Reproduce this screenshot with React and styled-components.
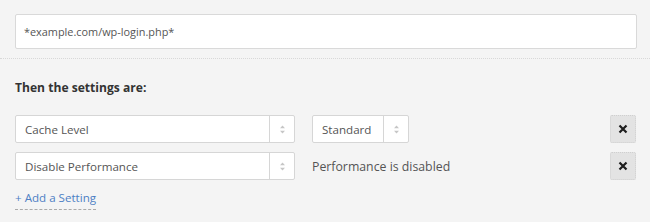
import React from "react";
import styled, { createGlobalStyle } from "styled-components";

const GlobalStyle = createGlobalStyle`
  body {
    margin: 0;
    background: #f4f4f4;
    font-family: "Open Sans", "Liberation Sans", sans-serif;
    color: #444;
  }
`;

const Page = styled.div`
  width: 650px;
  height: 222px;
  overflow: hidden;
`;

const TopSection = styled.div`
  padding: 14px 13px 9px 15px;
  border-bottom: 1px dotted #d8d8d8;
`;

const TextInput = styled.div`
  box-sizing: border-box;
  height: 35px;
  background: #fff;
  border: 1px solid #d9d9d9;
  border-radius: 2px;
  padding: 0 8px;
  display: flex;
  align-items: center;
  font-size: 10.9px;
  color: #555;
`;

const Settings = styled.div`
  padding: 20px 14px 0 15px;
`;

const Heading = styled.h3`
  margin: 0 0 18px;
  font-size: 12.1px;
  font-weight: 700;
  line-height: 18px;
  color: #333;
`;

const Rows = styled.div`
  display: flex;
  flex-direction: column;
  gap: 9px;
`;

const Row = styled.div`
  display: grid;
  grid-template-columns: 280px 1fr 26px;
  column-gap: 17px;
  align-items: center;
  height: 28px;
`;

const Select = styled.div`
  box-sizing: border-box;
  width: ${(p) => p.$width}px;
  height: 28px;
  background: #fff;
  border: 1px solid #d6d6d6;
  border-radius: 2px;
  display: flex;
  font-size: 11.6px;
  color: #555;
`;

const SelectLabel = styled.span`
  flex: 1;
  display: flex;
  align-items: center;
  padding-left: 9px;
`;

const Arrows = styled.span`
  width: 24px;
  border-left: 1px solid #d6d6d6;
  display: flex;
  align-items: center;
  justify-content: center;
`;

const StatusText = styled.span`
  font-size: 12.3px;
  color: #555;
`;

const RemoveButton = styled.button`
  box-sizing: border-box;
  width: 26px;
  height: 28px;
  padding: 0;
  background: #e3e3e3;
  border: 1px dotted #cfcfcf;
  border-radius: 2px;
  display: flex;
  align-items: center;
  justify-content: center;
  cursor: pointer;
`;

const AddLink = styled.a`
  display: inline-block;
  margin-top: 9px;
  font-size: 11.6px;
  color: #4d7fc4;
  text-decoration: none;
  line-height: 17px;
  padding-bottom: 3px;
  border-bottom: 1px dashed #aaa;
`;

const Updown = () => (
  <svg width="7" height="11" viewBox="0 0 7 11">
    <path d="M1 4.2 L3.5 1.5 L6 4.2 Z" fill="#c6c6c6" />
    <path d="M1 6.8 L3.5 9.5 L6 6.8 Z" fill="#c6c6c6" />
  </svg>
);

const Cross = () => (
  <svg width="10" height="10" viewBox="0 0 10 10">
    <path d="M1.5 1.5 L8.5 8.5 M8.5 1.5 L1.5 8.5" stroke="#1e1e1e" strokeWidth="2.2" />
  </svg>
);

const SelectBox = ({ label, width }) => (
  <Select $width={width}>
    <SelectLabel>{label}</SelectLabel>
    <Arrows>
      <Updown />
    </Arrows>
  </Select>
);

export default function App() {
  return (
    <Page>
      <GlobalStyle />
      <TopSection>
        <TextInput>*example.com/wp-login.php*</TextInput>
      </TopSection>
      <Settings>
        <Heading>Then the settings are:</Heading>
        <Rows>
          <Row>
            <SelectBox label="Cache Level" width={280} />
            <SelectBox label="Standard" width={97} />
            <RemoveButton aria-label="Remove">
              <Cross />
            </RemoveButton>
          </Row>
          <Row>
            <SelectBox label="Disable Performance" width={280} />
            <StatusText>Performance is disabled</StatusText>
            <RemoveButton aria-label="Remove">
              <Cross />
            </RemoveButton>
          </Row>
        </Rows>
        <AddLink href="#">+ Add a Setting</AddLink>
      </Settings>
    </Page>
  );
}
